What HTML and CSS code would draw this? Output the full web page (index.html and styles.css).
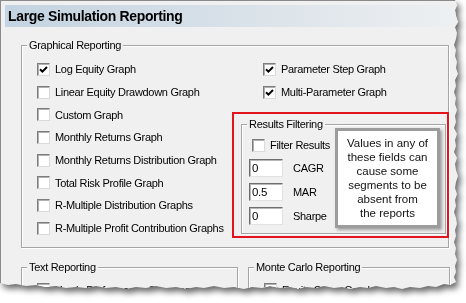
FILE: index.html
```html
<html>

<head>
    <link rel="stylesheet" href="styles.css">
</head>

<body>
    <div class="sheet">
        <div class="window">
            <div class="titlebar">Large Simulation Reporting</div>

            <div class="group graphical">
                <div class="group-title">Graphical Reporting</div>
                <div class="graph-cols">
                    <div class="col-left">
                        <div class="check-row"><span class="check"><svg viewBox="0 0 11 11"><path d="M2 5.2 L4.4 7.6 L9 3"/></svg></span>Log Equity Graph</div>
                        <div class="check-row"><span class="check"></span>Linear Equity Drawdown Graph</div>
                        <div class="check-row"><span class="check"></span>Custom Graph</div>
                        <div class="check-row"><span class="check"></span>Monthly Returns Graph</div>
                        <div class="check-row"><span class="check"></span>Monthly Returns Distribution Graph</div>
                        <div class="check-row"><span class="check"></span>Total Risk Profile Graph</div>
                        <div class="check-row"><span class="check"></span>R-Multiple Distribution Graphs</div>
                        <div class="check-row"><span class="check"></span>R-Multiple Profit Contribution Graphs</div>
                    </div>
                    <div class="col-right">
                        <div class="check-row"><span class="check"><svg viewBox="0 0 11 11"><path d="M2 5.2 L4.4 7.6 L9 3"/></svg></span>Parameter Step Graph</div>
                        <div class="check-row"><span class="check"><svg viewBox="0 0 11 11"><path d="M2 5.2 L4.4 7.6 L9 3"/></svg></span>Multi-Parameter Graph</div>

                        <div class="highlight">
                            <div class="group results">
                                <div class="group-title">Results Filtering</div>
                                <div class="check-row filter"><span class="check"></span>Filter Results</div>
                                <div class="field-row"><span class="field">0</span>CAGR</div>
                                <div class="field-row"><span class="field">0.5</span>MAR</div>
                                <div class="field-row"><span class="field">0</span>Sharpe</div>
                            </div>
                            <div class="callout">Values in any of<br>these fields can<br>cause some<br>segments to be<br>absent from<br>the reports</div>
                        </div>
                    </div>
                </div>
            </div>

            <div class="bottom-groups">
                <div class="group text-rep">
                    <div class="group-title">Text Reporting</div>
                    <div class="check-row"><span class="check"></span>Yearly Performance Summary</div>
                </div>
                <div class="group monte">
                    <div class="group-title">Monte Carlo Reporting</div>
                    <div class="check-row"><span class="check"></span>Equity Curve Graph</div>
                </div>
            </div>
        </div>
    </div>
</body>

</html>
```

FILE: styles.css
```css
* {
    margin: 0;
    box-sizing: border-box;
}

body {
    background: #fff;
    font-family: "Liberation Sans", Arial, sans-serif;
    font-size: 11px;
    letter-spacing: -0.3px;
    color: #000;
}

.sheet {
    width: 466px;
    height: 303px;
    filter: drop-shadow(3px 4px 3px rgba(0, 0, 0, 0.6));
}

.window {
    width: 462px;
    height: 296px;
    background: #f0f0f0;
    border-left: 1px solid #8a8a8a;
    border-top: 1px solid #8a8a8a;
    overflow: hidden;
    clip-path: polygon(0 0, 455px 0, 457px 5px, 455px 10px, 456px 16px, 458px 22px, 455px 27px, 457px 33px, 456px 39px, 454px 45px, 456px 50px, 455px 56px, 457px 62px, 456px 68px, 458px 74px, 455px 80px, 456px 86px, 454px 92px, 456px 98px, 455px 104px, 457px 110px, 455px 116px, 456px 122px, 454px 128px, 457px 134px, 455px 140px, 456px 146px, 454px 152px, 457px 158px, 455px 164px, 456px 170px, 458px 176px, 456px 182px, 455px 188px, 457px 194px, 455px 200px, 456px 206px, 454px 212px, 456px 218px, 457px 224px, 455px 230px, 456px 236px, 454px 242px, 456px 248px, 455px 254px, 457px 260px, 455px 266px, 456px 272px, 454px 277px, 456px 282px,
        450px 285px, 444px 284px, 436px 287px, 428px 286px, 420px 288px, 410px 287px, 402px 289px, 394px 287px, 386px 288px, 376px 286px, 368px 288px, 360px 287px, 350px 289px, 342px 287px, 334px 288px, 324px 286px, 316px 288px, 306px 287px, 298px 289px, 290px 287px, 280px 288px, 270px 286px, 262px 288px, 252px 287px, 244px 289px, 234px 287px, 224px 288px, 214px 286px, 204px 288px, 196px 287px, 186px 289px, 176px 287px, 166px 288px, 156px 286px, 146px 288px, 136px 287px, 126px 289px, 116px 287px, 106px 288px, 96px 286px, 86px 288px, 76px 287px, 66px 288px, 56px 286px, 46px 287px, 36px 285px, 26px 286px, 16px 284px, 8px 285px, 0 283px);
}

.titlebar {
    margin: 4px 0 0 4px;
    height: 22px;
    padding: 1px 0 0 3px;
    line-height: 21px;
    font-size: 14px;
    font-weight: bold;
    letter-spacing: -0.35px;
    background: linear-gradient(to right, #c3d3e1, #dde4ea 60%, #eef0f2);
}

/* group boxes */
.group {
    border: 1px solid #a5a5a5;
    box-shadow: inset 1px 1px 0 #fff, 1px 1px 0 #fff;
}

.group-title {
    width: fit-content;
    margin: -7px 0 0 5px;
    padding: 0 2px;
    line-height: 13px;
    background: #f0f0f0;
}

.graphical {
    margin: 18px 0 0 20px;
    width: 428px;
    padding-bottom: 7px;
}

.graph-cols {
    display: flex;
    padding: 6px 0 0 15px;
}

.col-left {
    width: 195px;
}

.col-right {
    width: 216px;
}

.col-right > .check-row {
    padding-left: 31px;
}

/* checkbox rows */
.check-row {
    display: flex;
    align-items: center;
    gap: 5px;
    height: 22.7px;
    white-space: nowrap;
}

.check {
    width: 13px;
    height: 13px;
    flex: none;
    background: #fff;
    border: 1px solid;
    border-color: #7c7c7c #dadada #dadada #7c7c7c;
    box-shadow: inset 1px 1px 0 #b0b0b0;
}

.check svg {
    display: block;
    width: 11px;
    height: 11px;
}

.check path {
    fill: none;
    stroke: #000;
    stroke-width: 2;
}

/* red annotation + results filtering */
.highlight {
    position: relative;
    width: 217px;
    margin-top: 8.6px;
    border: 2px solid #e3141c;
}

.results {
    margin: 10px 1px 2px 7px;
    padding-bottom: 8px;
}

.results .filter {
    height: 13px;
    margin: 8px 0 0 10px;
}

.field-row {
    display: flex;
    align-items: center;
    gap: 10px;
    height: 18px;
    margin: 6px 0 0 7px;
}

.filter + .field-row {
    margin-top: 7px;
}

.field {
    width: 34px;
    height: 18px;
    padding: 0 0 0 2px;
    line-height: 16px;
    font-size: 11.5px;
    background: #fff;
    border: 1px solid;
    border-color: #6e6e6e #e2e2e2 #e2e2e2 #6e6e6e;
    box-shadow: inset 1px 1px 0 #b8b8b8;
}

.callout {
    position: absolute;
    left: 101px;
    top: 14px;
    width: 105px;
    height: 100px;
    display: flex;
    align-items: center;
    justify-content: center;
    text-align: center;
    font-size: 11.5px;
    line-height: 14px;
    letter-spacing: 0;
    color: #111;
    background: #fff;
    border: 3px solid #9c9c9c;
    box-shadow: 2px 2px 3px rgba(0, 0, 0, 0.35);
}

/* lower groups, cut off by the tear */
.bottom-groups {
    display: flex;
    gap: 10px;
    margin: 19px 0 0 20px;
}

.text-rep {
    width: 217px;
    height: 60px;
}

.monte {
    width: 202px;
    height: 60px;
}

.bottom-groups .check-row {
    margin-top: 5px;
    padding-left: 15px;
}
```
